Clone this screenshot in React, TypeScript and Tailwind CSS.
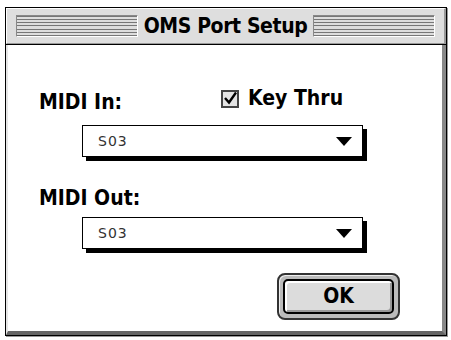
import React from "react";

const Stripes = () => (
  <div className="flex-1 h-[22px] flex flex-col justify-between border-t border-l border-[#888] border-b border-r border-b-white border-r-white">
    {Array.from({ length: 7 }).map((_, i) => (
      <div key={i} className="h-[1px] bg-[#777]" />
    ))}
  </div>
);

const Popup = () => (
  <div className="ml-[74px] w-[285px] h-[36px]">
    <div className="w-[281px] h-[32px] border border-black bg-white shadow-[4px_4px_0_#000] flex items-center justify-between pl-[15px] pr-[10px]">
      <span className="text-[14px] text-[#333] tracking-[1px]" style={{ fontFamily: '"DejaVu Sans", sans-serif' }}>S03</span>
      <svg width="16" height="9" viewBox="0 0 16 9"><polygon points="0,0 16,0 8,9" fill="#000" /></svg>
    </div>
  </div>
);

export default function App() {
  const bold = { fontFamily: '"DejaVu Sans Condensed", "DejaVu Sans", sans-serif', fontStretch: "condensed" } as React.CSSProperties;
  return (
    <div className="w-[451px] h-[340px] bg-white pt-[7px] pl-[5px]">
      <div className="w-[442px] h-[329px] border border-black bg-white flex flex-col shadow-[1px_1px_0_#999]">
        {/* Title bar */}
        <div className="h-[36px] bg-[#dedede] border-t border-l border-white border-r-2 border-r-[#9a9a9a] border-b border-b-[#999] flex items-center px-[9px] gap-[6px]">
          <Stripes />
          <span className="text-[21px] font-bold text-black leading-none tracking-[-0.4px]" style={bold}>OMS Port Setup</span>
          <Stripes />
        </div>
        <div className="h-[1px] bg-black" />
        {/* Content */}
        <div className="flex-1 flex flex-col border-l-2 border-l-[#e6e6e6] border-r-4 border-r-[#888] border-b-4 border-b-[#666]">
          <div className="flex items-end h-[72px] pl-[31px]">
            <div className="w-[182px] mb-[2px]">
              <span className="text-[21px] font-bold leading-none" style={bold}>MIDI In:</span>
            </div>
            <div className="flex items-center gap-[9px] mb-[8px]">
              <div className="w-[18px] h-[18px] border-2 border-[#444] bg-[#e4e4e4] flex items-center justify-center">
                <svg width="13" height="13" viewBox="0 0 13 13"><path d="M1 6 L5 10.5 L12 0.5" stroke="#000" strokeWidth="2.4" fill="none" /></svg>
              </div>
              <span className="text-[21px] font-bold leading-none" style={bold}>Key Thru</span>
            </div>
          </div>
          <div className="h-[8px]" />
          <Popup />
          <div className="flex items-end h-[48px] pl-[31px]">
            <span className="text-[21px] font-bold leading-none" style={bold}>MIDI Out:</span>
          </div>
          <div className="h-[8px]" />
          <Popup />
          <div className="flex justify-end pr-[42px] mt-[20px]">
            <div className="w-[123px] h-[47px] rounded-[8px] border-2 border-[#333] bg-[#bbb] p-[4px] shadow-[inset_1px_1px_0_#eee]">
              <div className="w-full h-full rounded-[5px] border-2 border-black bg-[#dcdcdc] shadow-[inset_2px_2px_0_#fff,inset_-2px_-2px_0_#999] flex items-center justify-center">
                <span className="text-[21px] font-bold leading-none" style={bold}>OK</span>
              </div>
            </div>
          </div>
        </div>
      </div>
    </div>
  );
}
